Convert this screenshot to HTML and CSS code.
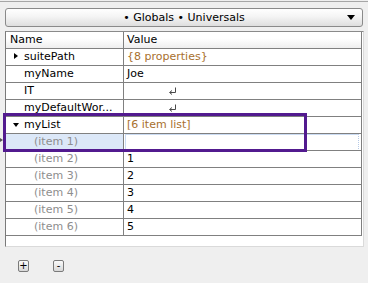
FILE: index.html
```
<!DOCTYPE html>
<html>
<head>
<meta charset="utf-8">
<link rel="stylesheet" href="styles.css">
</head>
<body>
<div class="rule"></div>
<div class="popup">
  <span class="popup-label">• Globals • Universals</span>
  <span class="popup-arrow"></span>
</div>
<div class="scroll">
  <div class="table">
    <div class="row header"><div class="cell name">Name</div><div class="cell value">Value</div></div>
    <div class="row"><div class="cell name"><span class="tri-right"></span>suitePath</div><div class="cell value obj">{8 properties}</div></div>
    <div class="row"><div class="cell name">myName</div><div class="cell value">Joe</div></div>
    <div class="row"><div class="cell name">IT</div><div class="cell value"><svg class="ret" width="9" height="9" viewBox="0 0 9 9"><path d="M7.5 0.5 V5.5 H2 M4 3.5 L1.5 5.5 L4 7.5" fill="none" stroke="#4a4a4a" stroke-width="1"/></svg></div></div>
    <div class="row"><div class="cell name">myDefaultWor...</div><div class="cell value"><svg class="ret" width="9" height="9" viewBox="0 0 9 9"><path d="M7.5 0.5 V5.5 H2 M4 3.5 L1.5 5.5 L4 7.5" fill="none" stroke="#4a4a4a" stroke-width="1"/></svg></div></div>
    <div class="row"><div class="cell name"><span class="tri-down"></span>myList</div><div class="cell value obj">[6 item list]</div></div>
    <div class="row selected"><div class="cell name item">(item 1)</div><div class="cell value"><div class="editor"></div></div></div>
    <div class="row"><div class="cell name item">(item 2)</div><div class="cell value">1</div></div>
    <div class="row"><div class="cell name item">(item 3)</div><div class="cell value">2</div></div>
    <div class="row"><div class="cell name item">(item 4)</div><div class="cell value">3</div></div>
    <div class="row"><div class="cell name item">(item 5)</div><div class="cell value">4</div></div>
    <div class="row"><div class="cell name item">(item 6)</div><div class="cell value">5</div></div>
  </div>
</div>
<div class="buttons">
  <div class="btn">+</div>
  <div class="btn">-</div>
</div>
<div class="highlight"></div>
<div class="edge-mark"></div>
</body>
</html>
```
FILE: styles.css
```
html, body {
  margin: 0;
  padding: 0;
}
body {
  width: 368px;
  height: 283px;
  background: #efefef;
  font-family: "DejaVu Sans", Verdana, sans-serif;
  font-size: 11px;
  color: #000;
  padding-top: 1px;
  box-sizing: border-box;
  position: relative;
  overflow: hidden;
}
.rule {
  height: 1px;
  background: #a6a6a6;
}
.popup {
  margin: 6px 0 0 5px;
  width: 358px;
  height: 19px;
  box-sizing: border-box;
  border: 1px solid #8a8a8a;
  border-radius: 3px;
  background: linear-gradient(#ffffff, #f4f4f4 45%, #dedede);
  display: flex;
  align-items: center;
  justify-content: center;
  position: relative;
}
.popup-label {
  line-height: 15px;
}
.popup-arrow {
  position: absolute;
  right: 7px;
  top: 6px;
  width: 0;
  height: 0;
  border-left: 4px solid transparent;
  border-right: 4px solid transparent;
  border-top: 5px solid #000;
}
.scroll {
  margin: 4px 0 0 5px;
  width: 359px;
  height: 216px;
  box-sizing: border-box;
  background: #fff;
  border-top: 1px solid #8a8a8a;
  border-left: 1px solid #7a7a7a;
  border-right: 1px solid #dadada;
  border-bottom: 1px solid #dadada;
}
.table {
  width: 356px;
  border-right: 1px solid #7f7f7f;
  box-sizing: border-box;
}
.row {
  display: grid;
  grid-template-columns: 118px 1fr;
  height: 17px;
  box-sizing: border-box;
  border-bottom: 1px solid #808080;
}
.header {
  background: linear-gradient(#ffffff 40%, #eeeeee);
}
.cell {
  line-height: 16px;
  white-space: nowrap;
  overflow: hidden;
  position: relative;
}
.name {
  border-right: 1px solid #808080;
  padding-left: 18px;
}
.header .name {
  padding-left: 4px;
}
.value {
  padding-left: 3px;
}
.item {
  padding-left: 28px;
  color: #8e8e8e;
}
.obj {
  color: #a8702e;
}
.ret {
  display: block;
  margin: 4px 0 0 41px;
}
.tri-right {
  position: absolute;
  left: 8px;
  top: 4px;
  width: 0;
  height: 0;
  border-top: 3.5px solid transparent;
  border-bottom: 3.5px solid transparent;
  border-left: 4px solid #000;
}
.tri-down {
  position: absolute;
  left: 7px;
  top: 6px;
  width: 0;
  height: 0;
  border-left: 3.5px solid transparent;
  border-right: 3.5px solid transparent;
  border-top: 4px solid #000;
}
.selected .name {
  background: #dce8f8;
}
.selected .value {
  padding: 0 2px 0 1px;
}
.editor {
  height: 15px;
  border: 1px solid #cbdcf3;
  border-right: 1px dotted #b5c9e6;
  background: #fff;
}
.buttons {
  display: flex;
  gap: 24px;
  margin: 13px 0 0 18px;
}
.btn {
  width: 11px;
  height: 12px;
  box-sizing: border-box;
  border: 1px solid #7a7a7a;
  border-radius: 2px;
  background: linear-gradient(#fbfbfb, #d8d8d8);
  font-size: 10px;
  line-height: 9px;
  text-align: center;
}
.highlight {
  position: absolute;
  left: 3px;
  top: 113px;
  width: 304px;
  height: 39px;
  box-sizing: border-box;
  border: 3px solid #521a8f;
}
.edge-mark {
  position: absolute;
  left: 0;
  top: 138px;
  width: 0;
  height: 0;
  border-top: 2px solid transparent;
  border-bottom: 2px solid transparent;
  border-left: 3px solid #555;
}
```
